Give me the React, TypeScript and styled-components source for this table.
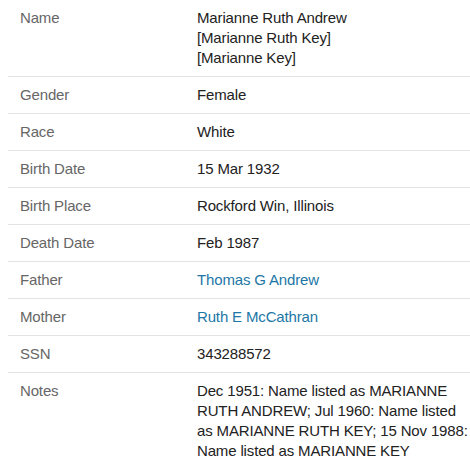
import { FC } from 'react'
import styled, { createGlobalStyle } from 'styled-components'

const GlobalStyle = createGlobalStyle`
  body {
    margin: 0 0 0 8px;
    background: #ffffff;
    font-family: "Liberation Sans", Arial, sans-serif;
  }
`

type Field = {
  label: string
  lines: string[]
  link?: boolean
}

const fields: Field[] = [
  {
    label: 'Name',
    lines: ['Marianne Ruth Andrew', '[Marianne Ruth Key]', '[Marianne Key]'],
  },
  { label: 'Gender', lines: ['Female'] },
  { label: 'Race', lines: ['White'] },
  { label: 'Birth Date', lines: ['15 Mar 1932'] },
  { label: 'Birth Place', lines: ['Rockford Win, Illinois'] },
  { label: 'Death Date', lines: ['Feb 1987'] },
  { label: 'Father', lines: ['Thomas G Andrew'], link: true },
  { label: 'Mother', lines: ['Ruth E McCathran'], link: true },
  { label: 'SSN', lines: ['343288572'] },
  {
    label: 'Notes',
    lines: [
      'Dec 1951: Name listed as MARIANNE RUTH ANDREW; Jul 1960: Name listed as MARIANNE RUTH KEY; 15 Nov 1988: Name listed as MARIANNE KEY',
    ],
  },
]

const App: FC = () => {
  return (
    <>
      <GlobalStyle />
      <Table>
        {fields.map((f, i) => (
          <Row key={f.label} last={i === fields.length - 1}>
            <Label>{f.label}</Label>
            <Value>
              {f.lines.map((line) =>
                f.link ? (
                  <Link key={line} href="#">
                    {line}
                  </Link>
                ) : (
                  <Line key={line}>{line}</Line>
                ),
              )}
            </Value>
          </Row>
        ))}
      </Table>
    </>
  )
}

const Table = styled.div`
  width: 462px;
  display: flex;
  flex-direction: column;
  font-size: 15px;
  line-height: 20px;
  letter-spacing: -0.15px;
`

const Row = styled.div<{ last?: boolean }>`
  display: grid;
  grid-template-columns: 189px 1fr;
  border-bottom: ${({ last }) => (last ? 'none' : '1px solid #e3e3e3')};
`

const Label = styled.div`
  padding: 8px 12px;
  color: #666666;
`

const Value = styled.div`
  padding: 8px 0;
  color: #222222;
  display: flex;
  flex-direction: column;
`

const Line = styled.span``

const Link = styled.a`
  color: #1c77a6;
  text-decoration: none;
`

export default App
